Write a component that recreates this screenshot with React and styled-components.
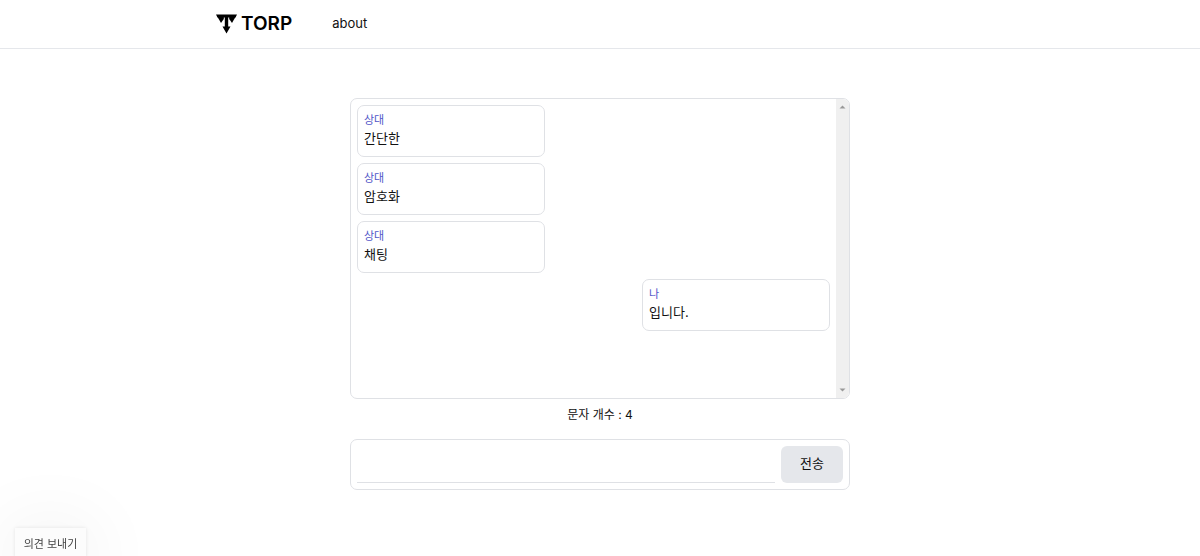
import React, { useState } from "react";
import { createGlobalStyle, styled } from "styled-components";

const GlobalStyle = createGlobalStyle`
  * {
    box-sizing: border-box;
  }

  body {
    margin: 0;
    background: #fff;
    color: #111;
    font-family: Inter, "Noto Sans CJK KR", sans-serif;
  }

  button,
  input {
    font: inherit;
    color: inherit;
  }
`;

const Page = styled.div`
  min-height: 100vh;
  overflow: hidden;
`;

const Header = styled.header`
  border-bottom: 1px solid #e5e7eb;
`;

const HeaderInner = styled.div`
  max-width: 768px;
  height: 48px;
  margin: 0 auto;
  display: flex;
  align-items: center;
  gap: 40px;
`;

const Brand = styled.a`
  display: flex;
  align-items: center;
  gap: 4px;
  color: #000;
  font-size: 19px;
  font-weight: 600;
  line-height: 24px;
  text-decoration: none;
`;

const NavLink = styled.a`
  display: block;
  color: #111;
  font-size: 13px;
  line-height: 20px;
  padding-bottom: 2px;
  text-decoration: none;
`;

const Main = styled.main`
  max-width: 500px;
  margin: 0 auto;
  padding-top: 49px;
`;

const ChatBox = styled.section`
  height: 301px;
  display: flex;
  border: 1px solid #dfe1e5;
  border-radius: 7px;
  overflow: hidden;
`;

const MessageList = styled.ul`
  flex: 1;
  margin: 0;
  padding: 6px;
  display: flex;
  flex-direction: column;
  gap: 6px;
  list-style: none;
`;

const Message = styled.li`
  width: 188px;
  height: 52px;
  padding: 5px 6px;
  align-self: ${({ $mine }) => ($mine ? "flex-end" : "flex-start")};
  border: 1px solid #dfe1e5;
  border-radius: 7px;
`;

const Sender = styled.div`
  color: #5156c8;
  font-size: 11px;
  line-height: 18px;
`;

const MessageText = styled.div`
  font-size: 13px;
  line-height: 18px;
`;

const ScrollTrack = styled.div`
  width: 13px;
  padding: 6px 0;
  display: flex;
  flex-direction: column;
  align-items: center;
  justify-content: space-between;
  background: #f0f0f0;
`;

const Count = styled.p`
  margin: 6px 0 14px;
  font-size: 12px;
  line-height: 20px;
  text-align: center;
`;

const MessageForm = styled.form`
  height: 51px;
  padding: 6px;
  display: flex;
  gap: 6px;
  border: 1px solid #dfe1e5;
  border-radius: 7px;
`;

const MessageInput = styled.input`
  flex: 1;
  min-width: 0;
  padding: 0 6px;
  border: 0;
  border-bottom: 1px solid #dfe1e5;
  background: transparent;
  font-size: 13px;
  outline: none;
`;

const SendButton = styled.button`
  width: 62px;
  padding: 0 0 4px;
  border: 0;
  border-radius: 6px;
  background: #e5e7eb;
  font-size: 13px;
  cursor: pointer;
`;

const FeedbackButton = styled.button`
  position: fixed;
  left: 15px;
  bottom: -2px;
  width: 71px;
  height: 30px;
  padding: 0;
  border: 0;
  background: #fcfcfc;
  box-shadow:
    0 0 4px rgba(0, 0, 0, 0.1),
    0 12px 80px rgba(0, 0, 0, 0.14);
  color: #444;
  font-size: 11px;
  cursor: pointer;
`;

const Logo = () => (
  <svg width="21" height="20" viewBox="0 0 21 20" aria-hidden="true">
    <path d="M0 0.5H21L19.5 3.5H1.5Z" />
    <path d="M1 2H7.8V5L5 9Z" />
    <path d="M13.2 2H20L16 9L13.2 5Z" />
    <path d="M8.8 2H12.2V12.5H14.5L10.5 19.5L6.5 12.5H8.8Z" />
  </svg>
);

const ScrollArrow = ({ down }) => (
  <svg width="7" height="4" viewBox="0 0 7 4" aria-hidden="true">
    <path d={down ? "M0.5 0.5H6.5L3.5 3.5Z" : "M3.5 0.5L6.5 3.5H0.5Z"} fill="#999" />
  </svg>
);

const messages = [
  { text: "간단한", mine: false },
  { text: "암호화", mine: false },
  { text: "채팅", mine: false },
  { text: "입니다.", mine: true },
];

const App = () => {
  const [list, setList] = useState(messages);
  const [value, setValue] = useState("");

  const onSubmit = (e) => {
    e.preventDefault();
    if (!value) return;
    setList([...list, { text: value, mine: true }]);
    setValue("");
  };

  return (
    <Page>
      <GlobalStyle />
      <Header>
        <HeaderInner>
          <Brand href="#">
            <Logo />
            TORP
          </Brand>
          <nav>
            <NavLink href="#about">about</NavLink>
          </nav>
        </HeaderInner>
      </Header>
      <Main>
        <ChatBox>
          <MessageList>
            {list.map((item, index) => (
              <Message key={index} $mine={item.mine}>
                <Sender>{item.mine ? "나" : "상대"}</Sender>
                <MessageText>{item.text}</MessageText>
              </Message>
            ))}
          </MessageList>
          <ScrollTrack>
            <ScrollArrow />
            <ScrollArrow down />
          </ScrollTrack>
        </ChatBox>
        <Count>문자 개수 : {list.length}</Count>
        <MessageForm onSubmit={onSubmit}>
          <MessageInput
            aria-label="메시지"
            value={value}
            onChange={(e) => setValue(e.target.value)}
          />
          <SendButton type="submit">전송</SendButton>
        </MessageForm>
      </Main>
      <FeedbackButton type="button">의견 보내기</FeedbackButton>
    </Page>
  );
};

export default App;
